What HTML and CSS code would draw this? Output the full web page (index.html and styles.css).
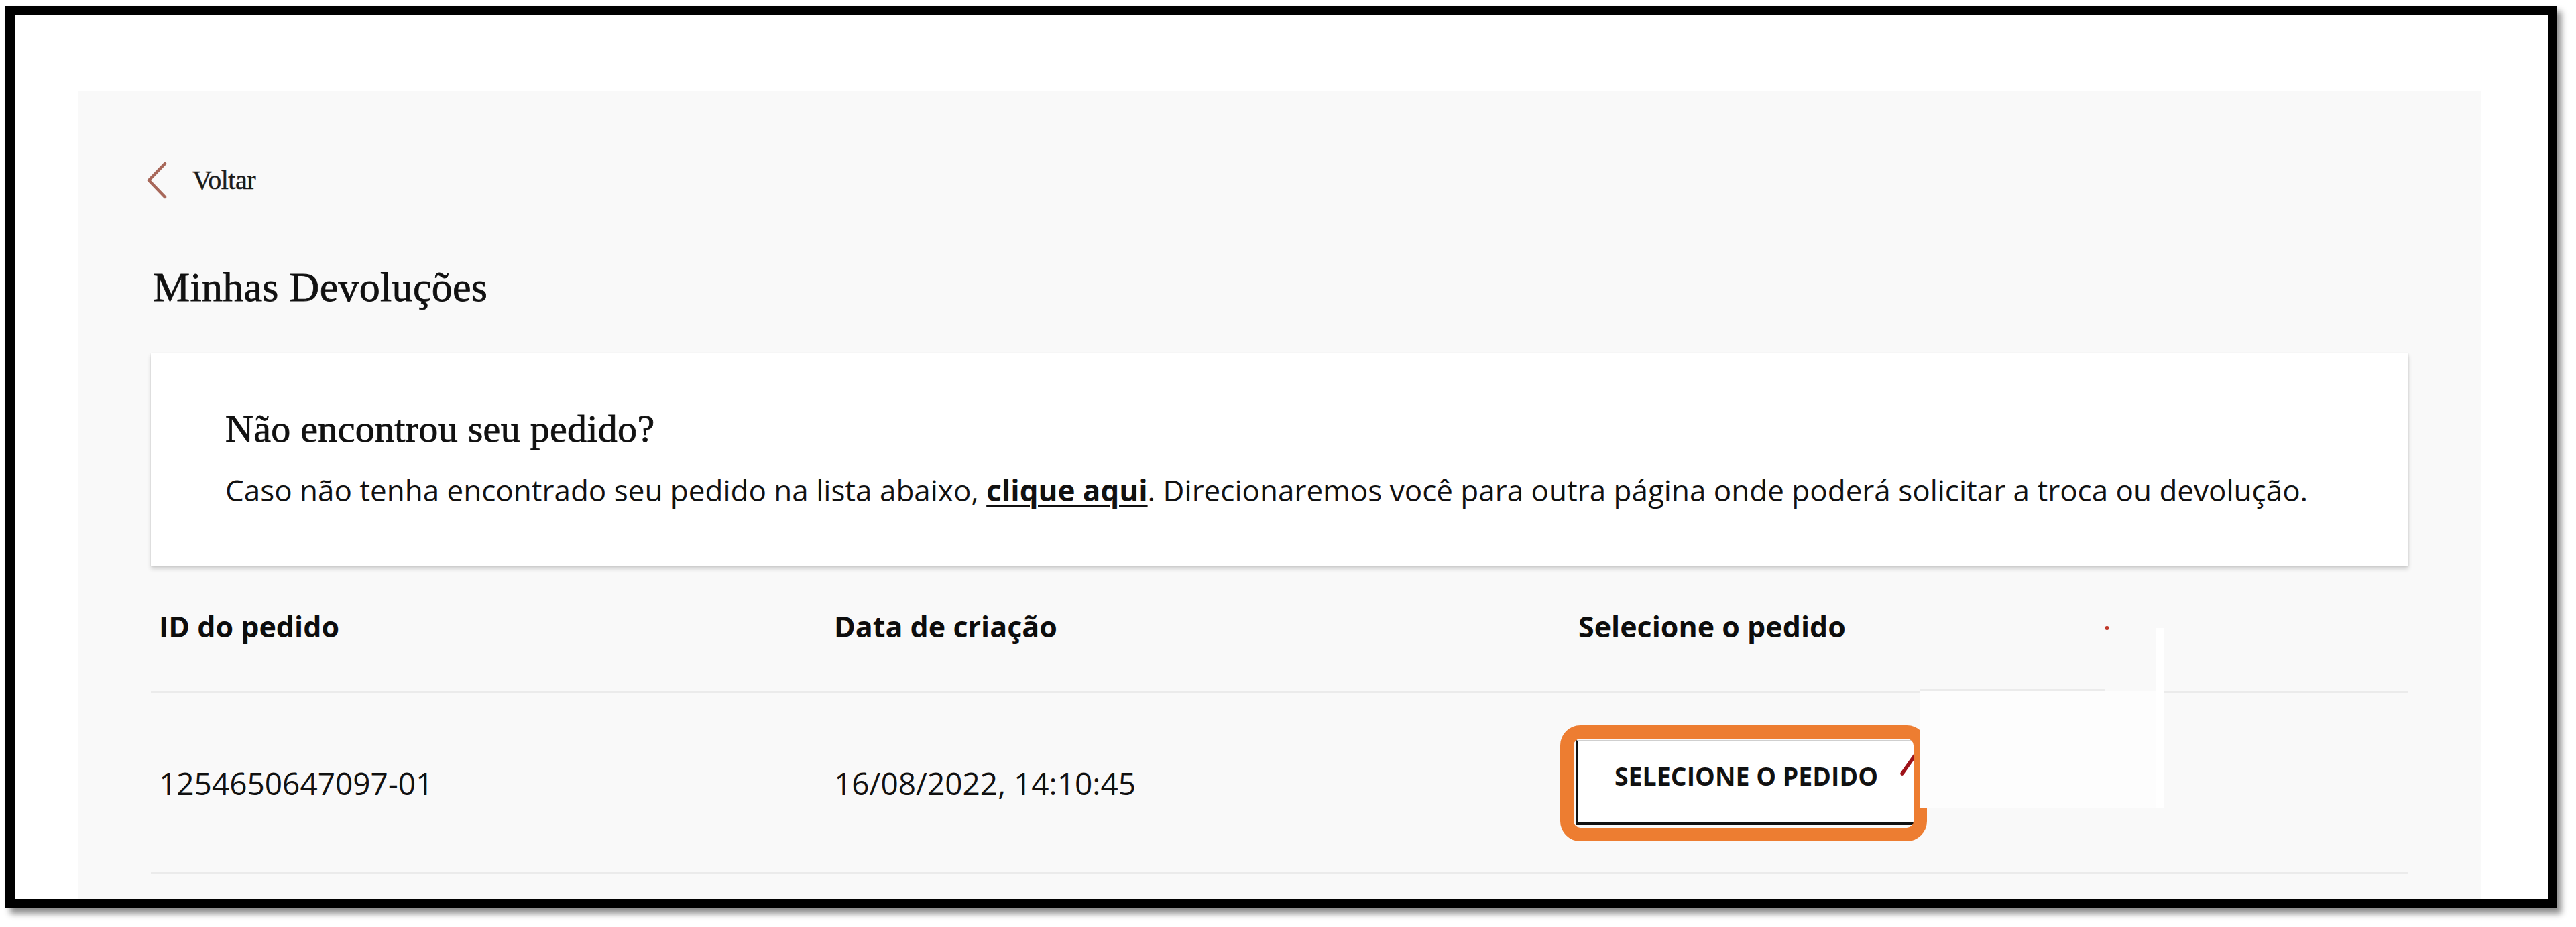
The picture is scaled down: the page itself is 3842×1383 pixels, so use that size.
FILE: index.html
```html
<!DOCTYPE html>
<html lang="pt-BR">
<head>
<meta charset="utf-8">
<title>Minhas Devoluções</title>
<link rel="stylesheet" href="styles.css">
</head>
<body>
<div class="frame">
  <div class="panel">
    <a class="back" href="#">
      <svg class="back-icon" width="34" height="56" viewBox="0 0 34 56" aria-hidden="true">
        <polyline points="29,3 5,28 29,53" fill="none" stroke="#a8685a" stroke-width="4.5" stroke-linecap="round" stroke-linejoin="round"/>
      </svg>
      <span class="back-label">Voltar</span>
    </a>
    <h1 class="page-title">Minhas Devoluções</h1>

    <section class="notice">
      <h2 class="notice-title">Não encontrou seu pedido?</h2>
      <p class="notice-text">Caso não tenha encontrado seu pedido na lista abaixo, <a class="notice-link" href="#">clique aqui</a>. Direcionaremos você para outra página onde poderá solicitar a troca ou devolução.</p>
    </section>

    <div class="orders">
      <div class="orders-row orders-head">
        <div class="cell">ID do pedido</div>
        <div class="cell">Data de criação</div>
        <div class="cell">Selecione o pedido</div>
      </div>
      <div class="orders-row orders-item">
        <div class="cell">1254650647097-01</div>
        <div class="cell">16/08/2022, 14:10:45</div>
        <div class="cell">
          <button class="select-btn" type="button">
            SELECIONE O PEDIDO
            <svg class="red-mark" width="26" height="34" viewBox="0 0 26 34" aria-hidden="true">
              <line x1="3" y1="31" x2="22" y2="4" stroke="#9e1219" stroke-width="5.5" stroke-linecap="round"/>
            </svg>
            <span class="highlight"></span>
          </button>
        </div>
      </div>
      <span class="glitch-seg"></span>
      <span class="glitch-patch"></span>
      <span class="glitch-line"></span>
      <span class="glitch-dot"></span>
    </div>
  </div>
</div>
</body>
</html>
```

FILE: styles.css
```css
html, body {
  margin: 0;
  padding: 0;
  background: #ffffff;
}

body {
  width: 3842px;
  height: 1383px;
  overflow: hidden;
  font-family: "Open Sans", Roboto, "Liberation Sans", Arial, sans-serif;
  color: #111111;
}

.frame {
  box-sizing: border-box;
  margin: 9px 0 0 8px;
  width: 3805px;
  height: 1346px;
  border-style: solid;
  border-color: #000000;
  border-width: 13px 13px 14px 15px;
  background: #ffffff;
  box-shadow: 7px 8px 9px rgba(0, 0, 0, 0.45);
  padding: 114px 100px 0 93px;
  overflow: hidden;
}

.panel {
  box-sizing: border-box;
  height: 1205px;
  background: #f9f9f9;
  padding: 105px 108px 0 109px;
}

.back {
  display: flex;
  align-items: center;
  gap: 36px;
  height: 55px;
  margin-left: -8px;
  color: #1a1a1a;
  text-decoration: none;
}

.back-icon {
  display: block;
  flex: none;
}

.back-label {
  font-family: "Liberation Serif", "Times New Roman", serif;
  font-size: 40px;
  line-height: 55px;
  letter-spacing: -0.5px;
  -webkit-text-stroke: 0.5px #1a1a1a;
}

.page-title {
  margin: 96px 0 0 3px;
  font-family: "Liberation Serif", "Times New Roman", serif;
  font-weight: normal;
  font-size: 62px;
  line-height: 72px;
  letter-spacing: 0.3px;
  color: #111111;
  -webkit-text-stroke: 0.8px #111111;
}

.notice {
  margin-top: 63px;
  height: 318px;
  box-sizing: border-box;
  background: #ffffff;
  padding: 80px 111px 0 111px;
  box-shadow: 0 4px 6px rgba(0, 0, 0, 0.16), 0 0 2px rgba(0, 0, 0, 0.12);
}

.notice-title {
  margin: 0;
  font-family: "Liberation Serif", "Times New Roman", serif;
  font-weight: normal;
  font-size: 58px;
  line-height: 66px;
  letter-spacing: 0.3px;
  color: #111111;
  -webkit-text-stroke: 0.8px #111111;
}

.notice-text {
  margin: 32px 0 0 0;
  font-size: 44px;
  line-height: 52px;
  color: #111111;
  white-space: nowrap;
}

.notice-link {
  color: #111111;
  font-weight: bold;
  text-decoration: underline;
  text-underline-offset: 5px;
  text-decoration-thickness: 3px;
}

.orders {
  position: relative;
  margin-top: 65px;
}

.orders-row {
  display: grid;
  grid-template-columns: 1007px 1110px 1fr;
  align-items: center;
  border-bottom: 3px solid #ebebeb;
}

.cell {
  padding-left: 12px;
}

.orders-head {
  padding-bottom: 71px;
  font-weight: bold;
  font-size: 43px;
  line-height: 50px;
  color: #0d0d0d;
}

.orders-item {
  padding: 70px 0;
  font-size: 46px;
  line-height: 48px;
  color: #111111;
}

.select-btn {
  position: relative;
  box-sizing: border-box;
  margin-left: -3px;
  width: 504px;
  height: 127px;
  padding: 0 0 16px 0;
  background: #ffffff;
  border-style: solid;
  border-color: #cfcfcf #ffffff #111111 #111111;
  border-width: 2px 0 5px 3px;
  font-family: "Open Sans", Roboto, "Liberation Sans", Arial, sans-serif;
  font-weight: bold;
  font-size: 37.5px;
  line-height: 46px;
  color: #111111;
  text-align: center;
  vertical-align: top;
  cursor: pointer;
}

.red-mark {
  position: absolute;
  left: 480px;
  top: 17px;
}

.highlight {
  position: absolute;
  left: -27px;
  top: -24px;
  width: 547px;
  height: 173px;
  box-sizing: border-box;
  border: 20px solid #ed7d31;
  border-radius: 30px;
  pointer-events: none;
}

.glitch-seg {
  position: absolute;
  left: 2639px;
  top: 118px;
  width: 275px;
  height: 3px;
  background: #ebebeb;
}

.glitch-patch {
  position: absolute;
  left: 2639px;
  top: 121px;
  width: 364px;
  height: 174px;
  background: #fdfdfd;
}

.glitch-line {
  position: absolute;
  left: 2991px;
  top: 27px;
  width: 12px;
  height: 268px;
  background: #ffffff;
}

.glitch-dot {
  position: absolute;
  left: 2915px;
  top: 24px;
  width: 5px;
  height: 6px;
  border-radius: 2px;
  background: #c0392b;
}
```
